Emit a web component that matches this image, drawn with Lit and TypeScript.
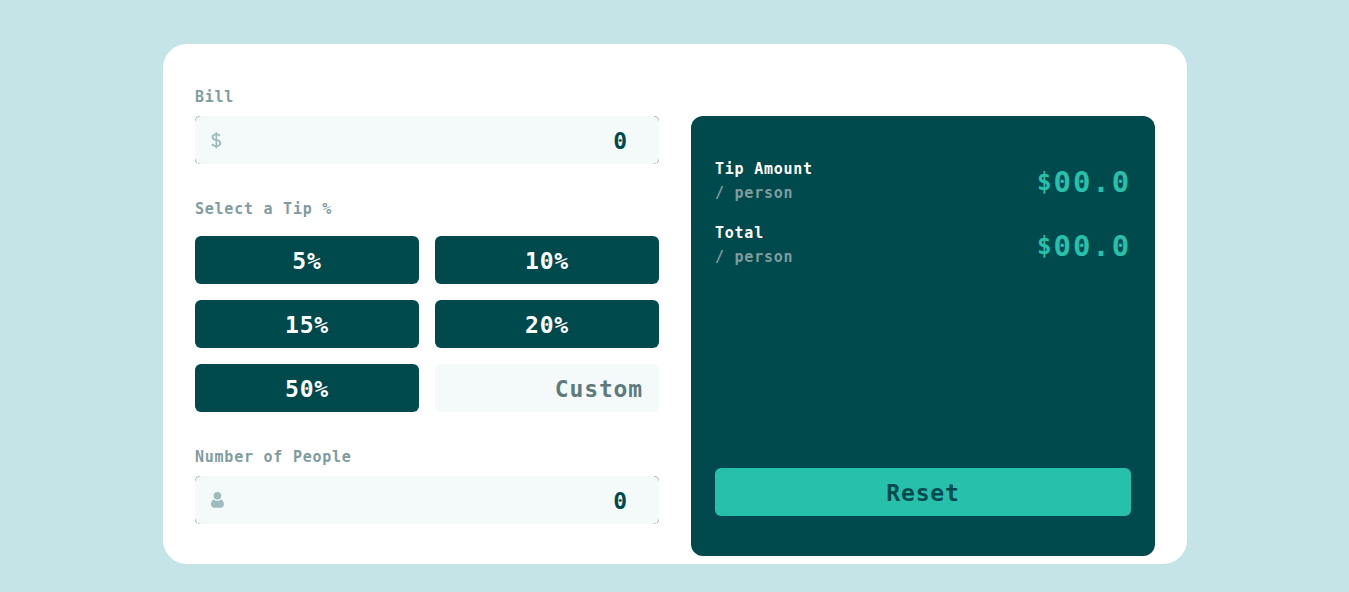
import { LitElement, html, css, svg } from "lit";
import { customElement, state } from "lit/decorators.js";

const dollarIcon = svg`<svg class="icon" width="11" height="17" viewBox="0 0 11 17"><path fill="#9EBBBD" stroke="#9EBBBD" stroke-width=".25" d="M6.016 16.328v-1.464c1.232-.08 2.22-.444 2.964-1.092.744-.648 1.116-1.508 1.116-2.58 0-1.05-.328-1.870-.984-2.460-.656-.590-1.700-1.060-3.096-1.370V3.300c.9.120 1.650.460 2.250 1.020l1.120-1.330c-.9-.83-2.020-1.300-3.370-1.410V.200H4.680v1.410c-1.200.09-2.160.44-2.880 1.050-.72.610-1.080 1.410-1.080 2.400 0 1 .32 1.780.96 2.340.64.560 1.640 1 3 1.320v4.420c-1.150-.12-2.190-.62-3.120-1.500L.35 12.980c1.200 1.130 2.640 1.760 4.330 1.890v1.458zM4.680 6.960c-.77-.23-1.310-.48-1.620-.76-.31-.28-.46-.67-.46-1.170s.19-.91.560-1.220c.37-.31.880-.49 1.520-.54zm1.336 6.200V9.060c.82.22 1.400.50 1.740.84.340.34.510.79.510 1.350 0 .540-.2.980-.6 1.310-.4.340-.95.540-1.650.600z"/></svg>`;

const personIcon = svg`<svg class="icon" width="13" height="16" viewBox="0 0 13 16"><path fill="#9EBBBD" d="M9.573 7.729c.243.002 1.275.057 2.001.79.820.833 1.271 2.290 1.271 4.100 0 1.955-1.264 3.201-3.220 3.201H3.220C1.264 15.820 0 14.574 0 12.620c0-1.811.452-3.268 1.271-4.101.726-.733 1.758-.788 2.001-.790a4.900 4.900 0 0 0 6.301 0zM6.423 0a3.820 3.820 0 1 1 0 7.640 3.820 3.820 0 0 1 0-7.640z"/></svg>`;

@customElement("app-root")
export class AppRoot extends LitElement {
  @state() private bill = 0;
  @state() private people = 0;
  private tips = [5, 10, 15, 20, 50];

  static styles = css`
    :host {
      display: flex;
      justify-content: center;
      box-sizing: border-box;
      height: 592px;
      padding: 44px 0 28px;
      background: #c5e4e7;
      font: bold 15px/24px "DejaVu Sans Mono", monospace;
      letter-spacing: 0.76px;
    }
    .card {
      box-sizing: border-box;
      display: grid;
      grid-template-columns: 464px 464px;
      column-gap: 32px;
      width: 1024px;
      margin-left: 1px;
      padding: 40px 32px 8px;
      border-radius: 24px;
      background: #fff;
    }
    .label {
      box-sizing: border-box;
      height: 24px;
      padding-top: 1px;
      color: #7f9c9f;
    }
    .frame {
      height: 48px;
      margin: 8px 0 32px;
      border-radius: 5px;
      background: #777;
    }
    .field {
      box-sizing: border-box;
      display: flex;
      align-items: center;
      justify-content: space-between;
      height: 48px;
      padding: 0 31px 0 16px;
      border-radius: 6px;
      background: #f4fafa;
      color: #00494d;
      font-size: 23px;
      letter-spacing: 0.85px;
    }
    .value {
      padding-top: 2px;
    }
    .icon {
      display: block;
    }
    .tips {
      display: grid;
      grid-template-columns: 1fr 1fr;
      gap: 16px;
      margin: 16px 0 32px;
    }
    .btn {
      display: block;
      box-sizing: border-box;
      height: 48px;
      padding: 2px 16px 0;
      border: 0;
      border-radius: 6px;
      background: #00494d;
      color: #fff;
      font: inherit;
      font-size: 23px;
      line-height: 46px;
      letter-spacing: 0.85px;
      text-align: center;
    }
    .custom {
      background: #f4fafa;
      color: #5e7a7d;
      text-align: right;
    }
    .result {
      box-sizing: border-box;
      display: flex;
      flex-direction: column;
      gap: 16px;
      height: 440px;
      margin-top: 32px;
      padding: 40px 24px;
      border-radius: 12px;
      background: #00494d;
      color: #fff;
    }
    .row {
      display: flex;
      align-items: center;
      justify-content: space-between;
      height: 48px;
    }
    .caption {
      padding-top: 2px;
    }
    .muted {
      color: #7f9c9f;
    }
    .amount {
      padding-top: 3px;
      color: #26c0ab;
      font-size: 29px;
      letter-spacing: 1.9px;
    }
    .currency {
      font-size: 24px;
      letter-spacing: 2px;
      vertical-align: 2px;
      line-height: 1;
    }
    .reset {
      margin-top: auto;
      background: #26c0ab;
      color: #00494d;
    }
  `;

  private row(title: string) {
    return html`<div class="row">
      <div class="caption"><div>${title}</div><div class="muted">/ person</div></div>
      <div class="amount"><span class="currency">$</span>00.0</div>
    </div>`;
  }

  render() {
    return html`<main class="card">
      <section>
        <div class="label">Bill</div>
        <div class="frame"><div class="field">${dollarIcon}<span class="value">${this.bill}</span></div></div>
        <div class="label">Select a Tip %</div>
        <div class="tips">
          ${this.tips.map((t) => html`<button class="btn">${t}%</button>`)}
          <div class="btn custom">Custom</div>
        </div>
        <div class="label">Number of People</div>
        <div class="frame"><div class="field">${personIcon}<span class="value">${this.people}</span></div></div>
      </section>
      <section class="result">
        ${this.row("Tip Amount")} ${this.row("Total")}
        <button class="btn reset">Reset</button>
      </section>
    </main>`;
  }
}
